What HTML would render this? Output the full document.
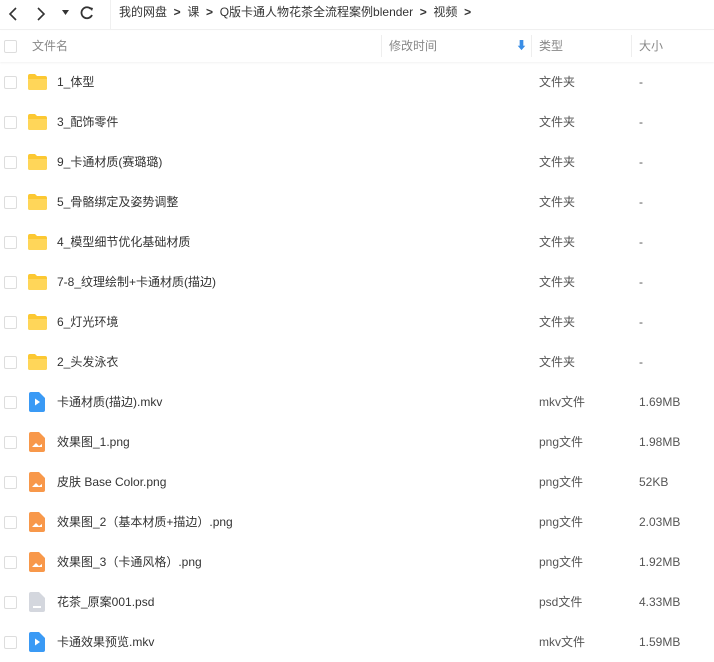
<!DOCTYPE html>
<html><head><meta charset="utf-8"><style>
*{margin:0;padding:0;box-sizing:border-box}
body{width:714px;height:657px;overflow:hidden;background:#fff;font-family:"Liberation Sans","Noto Sans CJK SC",sans-serif;font-size:12px;line-height:16px;color:#424e67}
.top{height:30px;position:relative;border-bottom:1px solid #f0f0f0}
.crumb{position:absolute;left:110px;top:0;height:30px;border-left:1px solid #f0f0f0;padding-left:8px;line-height:24px;color:#333;font-size:12px}
.hdr{position:absolute;top:31px;left:0;width:714px;height:31px;color:#888;background:#fff;box-shadow:0 1px 2px #f2f2f2}
.hdr span{position:absolute;top:7px;line-height:16px}
.sep{position:absolute;top:4px;width:1px;height:22px;background:#eee}
.cb{position:absolute;left:4px;width:13px;height:13px;border:1px solid #ddd;border-radius:2px;background:#fff}
.row{position:absolute;left:0;width:714px;height:40px}
.row .cb{top:14px}
.ic{position:absolute;left:27px;top:11px}
.nm,.tp,.sz{position:absolute;top:12px;line-height:16px;height:16px;white-space:nowrap}
.nm{left:57px;color:#333}
.tp{left:539px;color:#555}
.sz{left:639px;color:#555}
</style></head><body>
<div class="top">
<svg style="position:absolute;left:6px;top:6px" width="14" height="16"><path d="M10 2L4 8l6 6" stroke="#333" stroke-width="1.6" fill="none"/></svg>
<svg style="position:absolute;left:34px;top:6px" width="14" height="16"><path d="M4 2l6 6-6 6" stroke="#333" stroke-width="1.6" fill="none"/></svg>
<svg style="position:absolute;left:62px;top:10px" width="8" height="6"><path d="M0 0h7L3.5 5z" fill="#333"/></svg>
<svg style="position:absolute;left:79px;top:5px" width="16" height="16"><path d="M12 4A5.5 5.5 0 1 0 13 10" stroke="#333" stroke-width="1.8" fill="none"/><path d="M10 2l4 1-1 3z" fill="#333"/></svg>
<div class="crumb">我的网盘 &nbsp;<b>&gt;</b>&nbsp; 课 &nbsp;<b>&gt;</b>&nbsp; Q版卡通人物花茶全流程案例blender &nbsp;<b>&gt;</b>&nbsp; 视频 &nbsp;<b>&gt;</b></div>
</div>
<div class="hdr">
<div class="cb" style="top:9px"></div>
<span style="left:32px">文件名</span>
<div class="sep" style="left:381px"></div>
<span style="left:389px">修改时间</span>
<span style="left:516px;color:#3a8ee6;font-size:11px">⬇</span>
<div class="sep" style="left:531px"></div>
<span style="left:539px">类型</span>
<div class="sep" style="left:631px"></div>
<span style="left:639px">大小</span>
</div>
<div class="row" style="top:62px"><div class="cb"></div><svg class="ic" width="21" height="18"><path d="M1 3a2 2 0 0 1 2-2h5l2 2h8a2 2 0 0 1 2 2v10a2 2 0 0 1-2 2H3a2 2 0 0 1-2-2z" fill="#fcc832"/><path d="M1 6h19v9a2 2 0 0 1-2 2H3a2 2 0 0 1-2-2z" fill="#ffd659"/></svg><span class="nm">1_体型</span><span class="tp">文件夹</span><span class="sz">-</span></div>
<div class="row" style="top:102px"><div class="cb"></div><svg class="ic" width="21" height="18"><path d="M1 3a2 2 0 0 1 2-2h5l2 2h8a2 2 0 0 1 2 2v10a2 2 0 0 1-2 2H3a2 2 0 0 1-2-2z" fill="#fcc832"/><path d="M1 6h19v9a2 2 0 0 1-2 2H3a2 2 0 0 1-2-2z" fill="#ffd659"/></svg><span class="nm">3_配饰零件</span><span class="tp">文件夹</span><span class="sz">-</span></div>
<div class="row" style="top:142px"><div class="cb"></div><svg class="ic" width="21" height="18"><path d="M1 3a2 2 0 0 1 2-2h5l2 2h8a2 2 0 0 1 2 2v10a2 2 0 0 1-2 2H3a2 2 0 0 1-2-2z" fill="#fcc832"/><path d="M1 6h19v9a2 2 0 0 1-2 2H3a2 2 0 0 1-2-2z" fill="#ffd659"/></svg><span class="nm">9_卡通材质(赛璐璐)</span><span class="tp">文件夹</span><span class="sz">-</span></div>
<div class="row" style="top:182px"><div class="cb"></div><svg class="ic" width="21" height="18"><path d="M1 3a2 2 0 0 1 2-2h5l2 2h8a2 2 0 0 1 2 2v10a2 2 0 0 1-2 2H3a2 2 0 0 1-2-2z" fill="#fcc832"/><path d="M1 6h19v9a2 2 0 0 1-2 2H3a2 2 0 0 1-2-2z" fill="#ffd659"/></svg><span class="nm">5_骨骼绑定及姿势调整</span><span class="tp">文件夹</span><span class="sz">-</span></div>
<div class="row" style="top:222px"><div class="cb"></div><svg class="ic" width="21" height="18"><path d="M1 3a2 2 0 0 1 2-2h5l2 2h8a2 2 0 0 1 2 2v10a2 2 0 0 1-2 2H3a2 2 0 0 1-2-2z" fill="#fcc832"/><path d="M1 6h19v9a2 2 0 0 1-2 2H3a2 2 0 0 1-2-2z" fill="#ffd659"/></svg><span class="nm">4_模型细节优化基础材质</span><span class="tp">文件夹</span><span class="sz">-</span></div>
<div class="row" style="top:262px"><div class="cb"></div><svg class="ic" width="21" height="18"><path d="M1 3a2 2 0 0 1 2-2h5l2 2h8a2 2 0 0 1 2 2v10a2 2 0 0 1-2 2H3a2 2 0 0 1-2-2z" fill="#fcc832"/><path d="M1 6h19v9a2 2 0 0 1-2 2H3a2 2 0 0 1-2-2z" fill="#ffd659"/></svg><span class="nm">7-8_纹理绘制+卡通材质(描边)</span><span class="tp">文件夹</span><span class="sz">-</span></div>
<div class="row" style="top:302px"><div class="cb"></div><svg class="ic" width="21" height="18"><path d="M1 3a2 2 0 0 1 2-2h5l2 2h8a2 2 0 0 1 2 2v10a2 2 0 0 1-2 2H3a2 2 0 0 1-2-2z" fill="#fcc832"/><path d="M1 6h19v9a2 2 0 0 1-2 2H3a2 2 0 0 1-2-2z" fill="#ffd659"/></svg><span class="nm">6_灯光环境</span><span class="tp">文件夹</span><span class="sz">-</span></div>
<div class="row" style="top:342px"><div class="cb"></div><svg class="ic" width="21" height="18"><path d="M1 3a2 2 0 0 1 2-2h5l2 2h8a2 2 0 0 1 2 2v10a2 2 0 0 1-2 2H3a2 2 0 0 1-2-2z" fill="#fcc832"/><path d="M1 6h19v9a2 2 0 0 1-2 2H3a2 2 0 0 1-2-2z" fill="#ffd659"/></svg><span class="nm">2_头发泳衣</span><span class="tp">文件夹</span><span class="sz">-</span></div>
<div class="row" style="top:382px"><div class="cb"></div><svg class="ic" style="left:29px;top:10px" width="16" height="20"><path d="M2 0h8l6 6v12a2 2 0 0 1-2 2H2a2 2 0 0 1-2-2V2a2 2 0 0 1 2-2z" fill="#3a9af5"/><path d="M6 6.5v7l5-3.5z" fill="#fff"/></svg><span class="nm">卡通材质(描边).mkv</span><span class="tp">mkv文件</span><span class="sz">1.69MB</span></div>
<div class="row" style="top:422px"><div class="cb"></div><svg class="ic" style="left:29px;top:10px" width="16" height="20"><path d="M2 0h8l6 6v12a2 2 0 0 1-2 2H2a2 2 0 0 1-2-2V2a2 2 0 0 1 2-2z" fill="#f8984a"/><path d="M3 15l4-4 3 3 3-2v3z" fill="#fff"/></svg><span class="nm">效果图_1.png</span><span class="tp">png文件</span><span class="sz">1.98MB</span></div>
<div class="row" style="top:462px"><div class="cb"></div><svg class="ic" style="left:29px;top:10px" width="16" height="20"><path d="M2 0h8l6 6v12a2 2 0 0 1-2 2H2a2 2 0 0 1-2-2V2a2 2 0 0 1 2-2z" fill="#f8984a"/><path d="M3 15l4-4 3 3 3-2v3z" fill="#fff"/></svg><span class="nm">皮肤 Base Color.png</span><span class="tp">png文件</span><span class="sz">52KB</span></div>
<div class="row" style="top:502px"><div class="cb"></div><svg class="ic" style="left:29px;top:10px" width="16" height="20"><path d="M2 0h8l6 6v12a2 2 0 0 1-2 2H2a2 2 0 0 1-2-2V2a2 2 0 0 1 2-2z" fill="#f8984a"/><path d="M3 15l4-4 3 3 3-2v3z" fill="#fff"/></svg><span class="nm">效果图_2（基本材质+描边）.png</span><span class="tp">png文件</span><span class="sz">2.03MB</span></div>
<div class="row" style="top:542px"><div class="cb"></div><svg class="ic" style="left:29px;top:10px" width="16" height="20"><path d="M2 0h8l6 6v12a2 2 0 0 1-2 2H2a2 2 0 0 1-2-2V2a2 2 0 0 1 2-2z" fill="#f8984a"/><path d="M3 15l4-4 3 3 3-2v3z" fill="#fff"/></svg><span class="nm">效果图_3（卡通风格）.png</span><span class="tp">png文件</span><span class="sz">1.92MB</span></div>
<div class="row" style="top:582px"><div class="cb"></div><svg class="ic" style="left:29px;top:10px" width="16" height="20"><path d="M2 0h8l6 6v12a2 2 0 0 1-2 2H2a2 2 0 0 1-2-2V2a2 2 0 0 1 2-2z" fill="#d4d7de"/><path d="M4 14h8v2H4z" fill="#fff"/></svg><span class="nm">花茶_原案001.psd</span><span class="tp">psd文件</span><span class="sz">4.33MB</span></div>
<div class="row" style="top:622px"><div class="cb"></div><svg class="ic" style="left:29px;top:10px" width="16" height="20"><path d="M2 0h8l6 6v12a2 2 0 0 1-2 2H2a2 2 0 0 1-2-2V2a2 2 0 0 1 2-2z" fill="#3a9af5"/><path d="M6 6.5v7l5-3.5z" fill="#fff"/></svg><span class="nm">卡通效果预览.mkv</span><span class="tp">mkv文件</span><span class="sz">1.59MB</span></div>
</body></html>
